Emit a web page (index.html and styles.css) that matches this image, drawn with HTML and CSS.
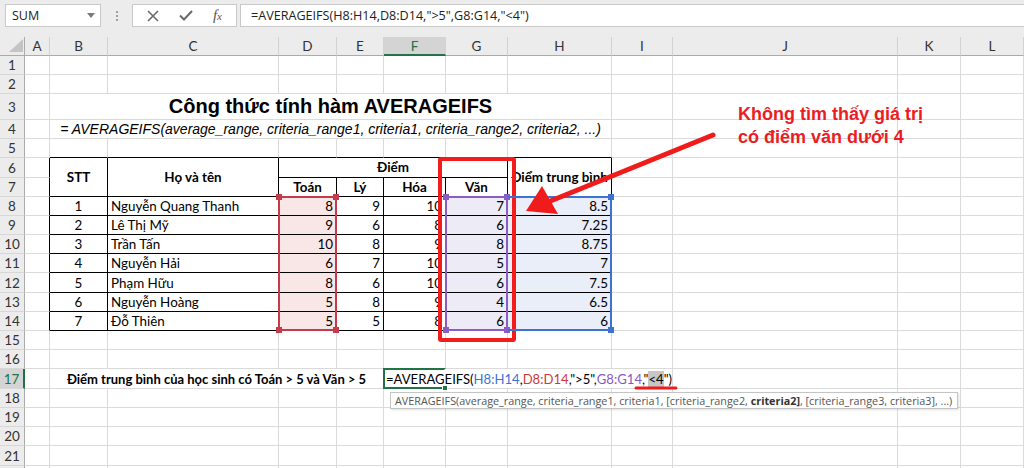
FILE: index.html
```html
<!DOCTYPE html>
<html lang="vi">
<head>
<meta charset="utf-8">
<title>AVERAGEIFS</title>
<link rel="stylesheet" href="styles.css">
</head>
<body>
<div class="app">
  <div class="fbar">
    <div class="namebox"><span>SUM</span><svg class="dd" width="8" height="5" viewBox="0 0 8 5"><path d="M0 0H8L4 5Z" fill="#7a7a7a"/></svg></div>
    <div class="grip"><i></i><i></i><i></i></div>
    <div class="btns">
      <svg width="12" height="12" viewBox="0 0 12 12"><path d="M1 1L11 11M11 1L1 11" stroke="#6a6a6a" stroke-width="1.6" fill="none"/></svg>
      <svg width="14" height="11" viewBox="0 0 14 11"><path d="M1 5.5L5 9.5L13 1" stroke="#6a6a6a" stroke-width="2" fill="none"/></svg>
      <span class="fx">f<span class="fxx">x</span></span>
    </div>
    <div class="finput">=AVERAGEIFS(H8:H14,D8:D14,"&gt;5",G8:G14,"&lt;4")</div>
  </div>

  <div class="sheetwrap">
    <div class="grid sheet">
      <!-- column headers -->
      <div class="corner"><svg width="14" height="13" viewBox="0 0 14 13"><path d="M0 13H14V0Z" fill="#c4c4c4"/></svg></div>
      <div class="ch">A</div><div class="ch">B</div><div class="ch">C</div><div class="ch">D</div><div class="ch">E</div><div class="ch sel">F</div><div class="ch">G</div><div class="ch">H</div><div class="ch">I</div><div class="ch">J</div><div class="ch">K</div><div class="ch">L</div>

      <!-- 1 -->
      <div class="rh">1</div><div class="c"></div><div class="c"></div><div class="c"></div><div class="c"></div><div class="c"></div><div class="c"></div><div class="c"></div><div class="c"></div><div class="c"></div><div class="c"></div><div class="c"></div><div class="c"></div>
      <!-- 2 -->
      <div class="rh">2</div><div class="c"></div><div class="c"></div><div class="c"></div><div class="c"></div><div class="c"></div><div class="c"></div><div class="c"></div><div class="c"></div><div class="c"></div><div class="c"></div><div class="c"></div><div class="c"></div>
      <!-- 3 -->
      <div class="rh">3</div><div class="c"></div><div class="c title s7">Công thức tính hàm AVERAGEIFS</div><div class="c"></div><div class="c"></div><div class="c"></div><div class="c"></div>
      <!-- 4 -->
      <div class="rh">4</div><div class="c"></div><div class="c syntax s7">= AVERAGEIFS(average_range, criteria_range1, criteria1, criteria_range2, criteria2, ...)</div><div class="c"></div><div class="c"></div><div class="c"></div><div class="c"></div>
      <!-- 5 -->
      <div class="rh">5</div><div class="c"></div><div class="c bb"></div><div class="c bb"></div><div class="c bb"></div><div class="c bb"></div><div class="c bb"></div><div class="c bb"></div><div class="c bb"></div><div class="c"></div><div class="c"></div><div class="c"></div><div class="c"></div>
      <!-- 6 -->
      <div class="rh">6</div><div class="c br"></div><div class="c t th r2">STT</div><div class="c t th r2">Họ và tên</div><div class="c t th s4">Điểm</div><div class="c t th r2">Điểm trung bình</div><div class="c"></div><div class="c"></div><div class="c"></div><div class="c"></div>
      <!-- 7 -->
      <div class="rh">7</div><div class="c br"></div><div class="c t th">Toán</div><div class="c t th">Lý</div><div class="c t th">Hóa</div><div class="c t th">Văn</div><div class="c"></div><div class="c"></div><div class="c"></div><div class="c"></div>
      <!-- 8 -->
      <div class="rh">8</div><div class="c br"></div><div class="c t ctr">1</div><div class="c t">Nguyễn Quang Thanh</div><div class="c t num fd">8</div><div class="c t num">9</div><div class="c t num">10</div><div class="c t num fg">7</div><div class="c t num fh">8.5</div><div class="c"></div><div class="c"></div><div class="c"></div><div class="c"></div>
      <!-- 9 -->
      <div class="rh">9</div><div class="c br"></div><div class="c t ctr">2</div><div class="c t">Lê Thị Mỹ</div><div class="c t num fd">9</div><div class="c t num">6</div><div class="c t num">8</div><div class="c t num fg">6</div><div class="c t num fh">7.25</div><div class="c"></div><div class="c"></div><div class="c"></div><div class="c"></div>
      <!-- 10 -->
      <div class="rh">10</div><div class="c br"></div><div class="c t ctr">3</div><div class="c t">Trần Tấn</div><div class="c t num fd">10</div><div class="c t num">8</div><div class="c t num">9</div><div class="c t num fg">8</div><div class="c t num fh">8.75</div><div class="c"></div><div class="c"></div><div class="c"></div><div class="c"></div>
      <!-- 11 -->
      <div class="rh">11</div><div class="c br"></div><div class="c t ctr">4</div><div class="c t">Nguyễn Hải</div><div class="c t num fd">6</div><div class="c t num">7</div><div class="c t num">10</div><div class="c t num fg">5</div><div class="c t num fh">7</div><div class="c"></div><div class="c"></div><div class="c"></div><div class="c"></div>
      <!-- 12 -->
      <div class="rh">12</div><div class="c br"></div><div class="c t ctr">5</div><div class="c t">Phạm Hữu</div><div class="c t num fd">8</div><div class="c t num">6</div><div class="c t num">10</div><div class="c t num fg">6</div><div class="c t num fh">7.5</div><div class="c"></div><div class="c"></div><div class="c"></div><div class="c"></div>
      <!-- 13 -->
      <div class="rh">13</div><div class="c br"></div><div class="c t ctr">6</div><div class="c t">Nguyễn Hoàng</div><div class="c t num fd">5</div><div class="c t num">8</div><div class="c t num">9</div><div class="c t num fg">4</div><div class="c t num fh">6.5</div><div class="c"></div><div class="c"></div><div class="c"></div><div class="c"></div>
      <!-- 14 -->
      <div class="rh">14</div><div class="c br"></div><div class="c t ctr">7</div><div class="c t">Đỗ Thiên</div><div class="c t num fd">5</div><div class="c t num">5</div><div class="c t num">8</div><div class="c t num fg">6</div><div class="c t num fh">6</div><div class="c"></div><div class="c"></div><div class="c"></div><div class="c"></div>
      <!-- 15 -->
      <div class="rh">15</div><div class="c"></div><div class="c"></div><div class="c"></div><div class="c"></div><div class="c"></div><div class="c"></div><div class="c"></div><div class="c"></div><div class="c"></div><div class="c"></div><div class="c"></div><div class="c"></div>
      <!-- 16 -->
      <div class="rh">16</div><div class="c"></div><div class="c"></div><div class="c"></div><div class="c"></div><div class="c"></div><div class="c"></div><div class="c"></div><div class="c"></div><div class="c"></div><div class="c"></div><div class="c"></div><div class="c"></div>
      <!-- 17 -->
      <div class="rh sel">17</div><div class="c"></div><div class="c lbl s4">Điểm trung bình của học sinh có Toán &gt; 5 và Văn &gt; 5</div><div class="c fcell s4">=AVERAGEIFS(<span class="kh">H8:H14</span>,<span class="kd">D8:D14</span>,"&gt;5",<span class="kg">G8:G14</span>,"<span class="hl">&lt;4</span><span class="caret"></span>")</div><div class="c"></div><div class="c"></div><div class="c"></div>
      <!-- 18 -->
      <div class="rh">18</div><div class="c"></div><div class="c"></div><div class="c"></div><div class="c"></div><div class="c"></div><div class="c"></div><div class="c"></div><div class="c"></div><div class="c"></div><div class="c"></div><div class="c"></div><div class="c"></div>
      <!-- 19 -->
      <div class="rh">19</div><div class="c"></div><div class="c"></div><div class="c"></div><div class="c"></div><div class="c"></div><div class="c"></div><div class="c"></div><div class="c"></div><div class="c"></div><div class="c"></div><div class="c"></div><div class="c"></div>
      <!-- 20 -->
      <div class="rh">20</div><div class="c"></div><div class="c"></div><div class="c"></div><div class="c"></div><div class="c"></div><div class="c"></div><div class="c"></div><div class="c"></div><div class="c"></div><div class="c"></div><div class="c"></div><div class="c"></div>
      <!-- 21 -->
      <div class="rh">21</div><div class="c"></div><div class="c"></div><div class="c"></div><div class="c"></div><div class="c"></div><div class="c"></div><div class="c"></div><div class="c"></div><div class="c"></div><div class="c"></div><div class="c"></div><div class="c"></div>
      <!-- 22 (below the visible area) -->
      <div class="rh"></div><div class="c"></div><div class="c"></div><div class="c"></div><div class="c"></div><div class="c"></div><div class="c"></div><div class="c"></div><div class="c"></div><div class="c"></div><div class="c"></div><div class="c"></div><div class="c"></div>
    </div>

    <!-- overlays: range highlights, active cell, annotation box -->
    <div class="grid overlay">
      <div class="rng rng-d"><i class="hd tl"></i><i class="hd tr"></i><i class="hd bl"></i><i class="hd br2"></i></div>
      <div class="rng rng-g"><i class="hd tl"></i><i class="hd tr"></i><i class="hd bl"></i><i class="hd br2"></i></div>
      <div class="rng rng-h"><i class="hd tr"></i><i class="hd br2"></i></div>
      <div class="active"><i class="fill-handle"></i></div>
      <div class="redbox"></div>
    </div>
  </div>

  <div class="tooltip">AVERAGEIFS(average_range, criteria_range1, criteria1, [criteria_range2, <b>criteria2]</b>, [criteria_range3, criteria3], ...)</div>

  <svg class="annot" width="1024" height="468" viewBox="0 0 1024 468">
    <line x1="713" y1="135" x2="548" y2="202" stroke="#f01c1c" stroke-width="5" stroke-linecap="round"/>
    <polygon points="526,211 542,186 558,214" fill="#f01c1c"/>
    <line x1="636" y1="388" x2="676" y2="388" stroke="#f01c1c" stroke-width="3" stroke-linecap="round"/>
  </svg>
  <div class="note">Không tìm thấy giá trị<br>có điểm văn dưới 4</div>
</div>
</body>
</html>
```

FILE: styles.css
```css
* { box-sizing: border-box; margin: 0; padding: 0; }
html, body { width: 1024px; height: 468px; overflow: hidden; background: #fff; }
body { font-family: Lato, "Noto Sans", sans-serif; color: #000; }
.app { position: relative; width: 1024px; height: 468px; }

/* formula bar */
.fbar { height: 37px; background: #ececec; display: flex; align-items: flex-start; padding: 4px 0 0 5px; }
.namebox { width: 96px; height: 23px; background: #fff; border: 1px solid #c9c9c9; display: flex; align-items: center; justify-content: space-between; padding: 0 5px 0 6px; font-family: "Open Sans", sans-serif; font-size: 12.5px; color: #222; }
.grip { width: 31px; height: 23px; display: flex; flex-direction: column; align-items: center; justify-content: center; gap: 2px; }
.grip i { display: block; width: 2px; height: 2px; background: #a0a0a0; }
.btns { width: 105px; height: 23px; background: #fff; border: 1px solid #c9c9c9; display: flex; align-items: center; justify-content: space-around; padding: 0 4px; }
.fx { font-family: "Liberation Serif", serif; font-style: italic; font-size: 15px; color: #555; line-height: 1; }
.fxx { font-size: 11px; }
.finput { flex: 1; margin-left: 3px; height: 23px; background: #fff; border: 1px solid #c9c9c9; border-right: none; display: flex; align-items: center; padding-left: 10px; font-family: "Open Sans", sans-serif; font-size: 12.6px; color: #222; white-space: nowrap; }

/* sheet grid */
.sheetwrap { position: relative; }
.grid {
  display: grid;
  grid-template-columns: 25px 25px 58px 171px 58px 47px 62px 62px 104px 61px 225px 63px 63px;
  grid-template-rows: 19px 19px 19px 26px 19px 19px 20px 19px 19px 19px 19px 19px 20px 19px 19px 19px 19px 20px 19px 19px 19px 20px 19px;
}
.sheet { background: #fff; }
.overlay { position: absolute; inset: 0; pointer-events: none; }

.corner { background: #ececec; border-right: 1px solid #ababab; border-bottom: 1px solid #ababab; display: flex; align-items: flex-end; justify-content: flex-end; padding: 0 1px 3px 0; }
.ch { background: #ececec; border-right: 1px solid #d2d2d2; border-bottom: 1px solid #ababab; display: flex; align-items: center; justify-content: center; font-size: 13.5px; color: #333; }
.ch.sel { background: #d4d4d4; color: #217346; border-bottom: 2px solid #217346; }
.rh { background: #ececec; border-right: 1px solid #ababab; border-bottom: 1px solid #d7d7d7; display: flex; align-items: center; justify-content: center; font-size: 13.5px; color: #333; }
.rh.sel { background: #d4d4d4; color: #217346; border-right: 2px solid #217346; }

.c { border-right: 1px solid #dadada; border-bottom: 1px solid #dadada; display: flex; align-items: flex-end; padding: 0 3px 1px; font-size: 13.4px; line-height: 16px; white-space: nowrap; min-width: 0; }
.bb { border-bottom-color: #000; }
.br { border-right-color: #000; }
.t { border-right-color: #000; border-bottom-color: #000; }
.th { font-weight: 700; justify-content: center; align-items: center; }
.ctr { justify-content: center; }
.num { justify-content: flex-end; }
.r2 { grid-row: span 2; }
.s4 { grid-column: span 4; }
.s7 { grid-column: span 7; }
.fd { background: #f9e6e6; }
.fg { background: #ecebf6; }
.fh { background: #e9eef8; }

.title { justify-content: center; font-family: "Liberation Sans", Arial, sans-serif; font-weight: 700; font-size: 20px; line-height: 22px; padding-bottom: 2px; }
.syntax { justify-content: center; font-family: "Liberation Sans", Arial, sans-serif; font-style: italic; font-size: 14px; line-height: 16px; padding-bottom: 1px; }
.lbl { justify-content: center; font-weight: 700; font-size: 13px; }
.fcell { padding-left: 2px; font-size: 13.1px; }
.kh { color: #3b73d4; }
.kd { color: #cc3a3a; }
.kg { color: #8859c4; }
.hl { background: #c6c6c6; }
.caret { display: inline-block; width: 1px; height: 15px; background: #000; }

/* overlays */
.rng { position: relative; border: 2px solid; margin: -1px 0 0 -1px; grid-row: 9 / 16; }
.rng-d { grid-column: 5; border-color: #c43c4a; color: #c43c4a; }
.rng-g { grid-column: 8; border-color: #8a5cc4; color: #8a5cc4; }
.rng-h { grid-column: 9; border-color: #3d72d2; color: #3d72d2; border-left-color: transparent; }
.hd { position: absolute; width: 6px; height: 6px; background: currentColor; }
.tl { top: -4px; left: -4px; }
.tr { top: -4px; right: -4px; }
.bl { bottom: -4px; left: -4px; }
.br2 { bottom: -4px; right: -4px; }
.active { position: relative; grid-column: 7; grid-row: 18; border: 2px solid #217346; border-right-color: transparent; margin: -1px 0 0 -1px; }
.fill-handle { position: absolute; right: -4px; bottom: -4px; width: 6px; height: 6px; background: #217346; border: 1px solid #fff; }
.redbox { grid-column: 8; grid-row: 7 / 16; margin: -1px -8px -11px -8px; border: 4px solid #f21c1c; border-radius: 3px; }

.tooltip { position: absolute; left: 390px; top: 392px; width: 568px; height: 17px; background: #fff; border: 1px solid #c4c4c4; box-shadow: 1px 1px 2px rgba(0,0,0,0.12); font-family: "Open Sans", sans-serif; font-size: 10.8px; line-height: 15px; color: #555; padding: 0 4px; white-space: nowrap; }
.tooltip b { color: #333; }
.annot { position: absolute; left: 0; top: 0; pointer-events: none; }
.note { position: absolute; left: 738px; top: 103px; font-family: "Liberation Sans", Arial, sans-serif; font-weight: 700; font-size: 18px; line-height: 23px; color: #ec1c24; white-space: nowrap; }
```
